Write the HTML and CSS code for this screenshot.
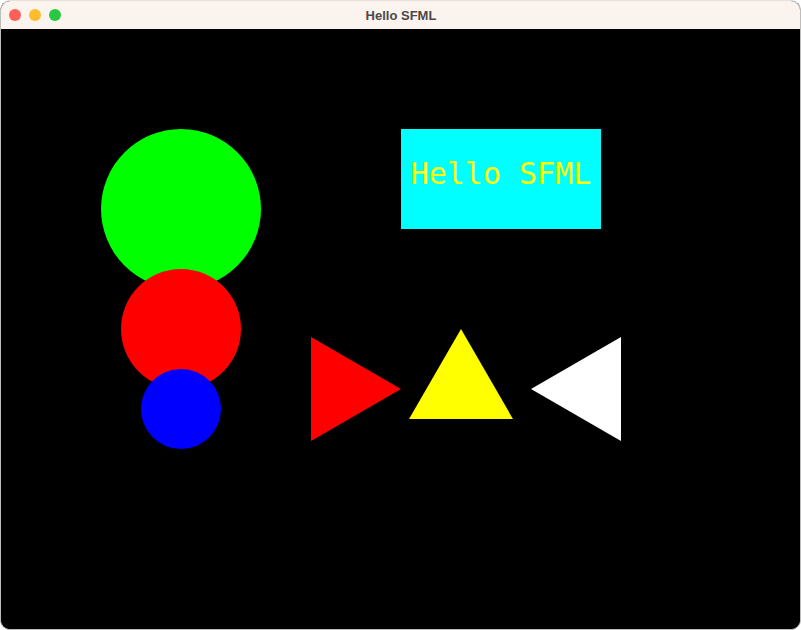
FILE: index.html
```html
<!DOCTYPE html>
<html>
<head>
<meta charset="utf-8">
<title>Hello SFML</title>
<link rel="stylesheet" href="styles.css">
</head>
<body>
<div class="window">
  <div class="titlebar">
    <div class="lights">
      <span class="light close"></span>
      <span class="light min"></span>
      <span class="light max"></span>
    </div>
    <div class="title">Hello SFML</div>
  </div>
  <div class="canvas">
    <svg class="scene" width="800" height="600" viewBox="0 0 800 600">
      <circle cx="180" cy="180" r="80" fill="#00ff00"/>
      <circle cx="180" cy="300" r="60" fill="#ff0000"/>
      <circle cx="180" cy="380" r="40" fill="#0000ff"/>
      <polygon points="400,360 310,308.04 310,411.96" fill="#ff0000"/>
      <polygon points="460,300 511.96,390 408.04,390" fill="#ffff00"/>
      <polygon points="530,360 620,308.04 620,411.96" fill="#ffffff"/>
    </svg>
    <div class="label-box">Hello SFML</div>
  </div>
</div>
</body>
</html>
```

FILE: styles.css
```css
html, body {
  margin: 0;
  padding: 0;
  background: #ffffff;
  overflow: hidden;
}

.window {
  width: 801px;
  height: 630px;
  box-sizing: border-box;
  border: 1px solid #bdbdbd;
  border-top-color: #e4e0dd;
  border-radius: 10px;
  overflow: hidden;
  display: flex;
  flex-direction: column;
  background: #000;
}

.titlebar {
  height: 28px;
  flex: none;
  background: #fbf3ee;
  display: flex;
  align-items: center;
  position: relative;
}

.lights {
  display: flex;
  gap: 8px;
  padding-left: 8px;
}

.light {
  width: 12px;
  height: 12px;
  border-radius: 50%;
  display: block;
}

.close { background: #fe5f57; }
.min { background: #febc2e; }
.max { background: #28c840; }

.title {
  position: absolute;
  left: 0;
  right: 0;
  top: 0;
  bottom: 0;
  display: flex;
  align-items: center;
  justify-content: center;
  font-family: "Liberation Sans", Arial, sans-serif;
  font-weight: bold;
  font-size: 13px;
  color: #4d4847;
  padding-left: 1px;
}

.canvas {
  position: relative;
  flex: 1;
  background: #000;
}

.scene {
  display: block;
}

.label-box {
  position: absolute;
  left: 400px;
  top: 100px;
  width: 200px;
  height: 100px;
  box-sizing: border-box;
  background: #00ffff;
  color: #ffff00;
  font-family: "DejaVu Sans Mono", monospace;
  font-size: 30px;
  display: flex;
  align-items: center;
  justify-content: center;
  padding-bottom: 12px;
}
```
